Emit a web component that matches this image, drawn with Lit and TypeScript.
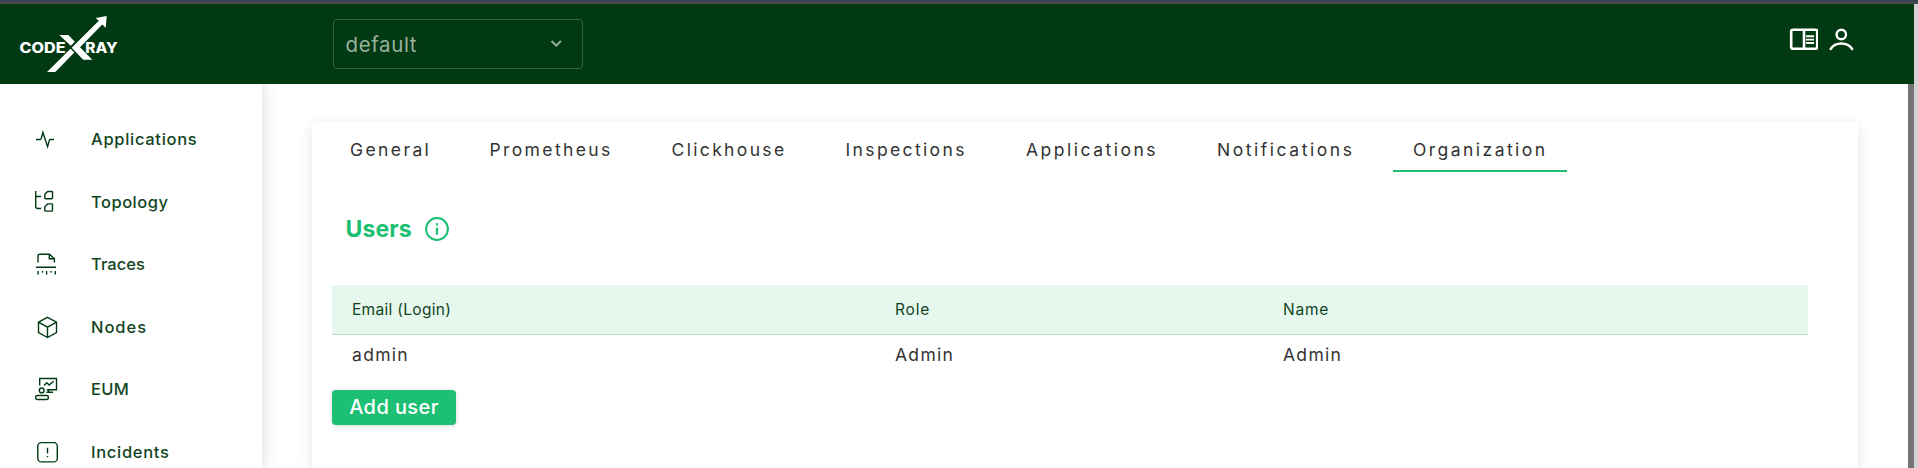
import { LitElement, html, svg, css } from "lit";
import { customElement, state } from "lit/decorators.js";

interface Label {
  text: string;
  track: number;
}

const NAV: (Label & { icon: unknown })[] = [
  {
    text: "Applications",
    track: 0.7,
    icon: svg`<path d="M8 20.5h4.3q.6 0 .8-.6l1.8-6.4 4.7 14.2 1.8-6.6q.2-.6.8-.6H26"/>`,
  },
  {
    text: "Topology",
    track: 0.5,
    icon: svg`<path d="M7.7 9v15.3q0 2.2 2.2 2.2h3.2M7.7 14.5h5.4M19.6 9.5h4.2q.7 0 .7.7v5.8q0 .7-.7.7h-6.3q-.7 0-.7-.7v-3.7zM19.6 21.9h4.2q.7 0 .7.7v5.8q0 .7-.7.7h-6.3q-.7 0-.7-.7v-3.7z"/>`,
  },
  {
    text: "Traces",
    track: 0.05,
    icon: svg`<path d="M10 18.5V12q0-1.8 1.8-1.8h9.6l5 4.6v3.7M21.3 10.2v4.6h5M8 23.2h20M10.1 27v3.4M14.5 27v1.7M18.6 27v3.4M23 27v1.7M27.3 27v3.4"/>`,
  },
  {
    text: "Nodes",
    track: 0.95,
    icon: svg`<path d="M19.5 10.3l9 4.8v10.6l-9 4.8-9-4.8V15.1zM10.5 15.1l9 5.1 9-5.1M19.5 20.2v10.3"/>`,
  },
  {
    text: "EUM",
    track: 0.3,
    icon: svg`<path d="M11.7 16.5v-7h16.8v11.2h-9.8M20.5 20.9v2.4M18.3 23.3H25M16 16.6l2.8-2.8 2.3 2.3 4.6-3.8"/><circle cx="13.7" cy="21.4" r="2.4"/><rect x="7.6" y="26.5" width="12.8" height="4" rx="1.9"/>`,
  },
  {
    text: "Incidents",
    track: 0.7,
    icon: svg`<rect x="9.8" y="10.6" width="19.5" height="19.3" rx="3.5"/><path d="M19.5 15.8v5.8M19.5 24v1.3"/>`,
  },
];

const TABS: Label[] = [
  { text: "General", track: 2.4 },
  { text: "Prometheus", track: 2.38 },
  { text: "Clickhouse", track: 2.35 },
  { text: "Inspections", track: 2.37 },
  { text: "Applications", track: 2.5 },
  { text: "Notifications", track: 2.54 },
  { text: "Organization", track: 2.45 },
];

@customElement("app-root")
export class AppRoot extends LitElement {
  static styles = css`
    :host {
      display: flex;
      flex-direction: column;
      height: 468px;
      overflow: hidden;
      background: #fff;
      font-family: Inter, "Noto Sans", sans-serif;
      color: #333;
    }
    svg {
      display: block;
      flex: none;
    }
    .strip {
      height: 2px;
      flex: none;
      background: #394254;
      border-bottom: 2px solid #4b4a4f;
    }
    .shell {
      display: flex;
      flex: 1;
      min-height: 0;
    }
    .page {
      flex: 1;
      display: flex;
      flex-direction: column;
      min-width: 0;
    }
    .gutter {
      width: 4px;
      background: #d3d3d3;
    }
    .header {
      height: 80px;
      flex: none;
      display: flex;
      align-items: flex-start;
      background: #013912;
      color: #fff;
    }
    .logo {
      margin: 6px 208px 0 15px;
    }
    .logo text {
      font: 800 14px Inter, sans-serif;
      fill: #fff;
    }
    .select {
      box-sizing: border-box;
      width: 250px;
      height: 50px;
      margin-top: 15px;
      padding: 0 19px 0 11.5px;
      border: 1px solid #34603f;
      border-radius: 4px;
      display: flex;
      align-items: center;
      justify-content: space-between;
      font-size: 20.5px;
      letter-spacing: 0.6px;
      color: #99b09f;
    }
    .actions {
      margin: 22px 58px 0 auto;
      display: flex;
      gap: 8px;
    }
    .body {
      flex: 1;
      display: flex;
      min-height: 0;
    }
    .nav {
      width: 262px;
      flex: none;
      padding-top: 24px;
      display: grid;
      grid-template-rows: 63px 62px 63px 62px 63px 62px;
      box-sizing: border-box;
      box-shadow: 2px 0 14px rgba(0, 0, 0, 0.13);
      clip-path: inset(0 -24px 0 0);
      color: #114522;
    }
    .item {
      display: flex;
      padding-left: 28px;
      gap: 23px;
      font-size: 16.5px;
      font-weight: 500;
      line-height: 62px;
    }
    .item svg {
      margin-top: 11px;
      fill: none;
      stroke: #013912;
      stroke-width: 1.4;
    }
    .main {
      flex: 1;
      padding: 38px 50px 0;
      display: flex;
      overflow: hidden;
    }
    .card {
      flex: 1;
      padding: 0 50px 0 20px;
      background: #fff;
      box-shadow: 0 3px 14px rgba(0, 0, 0, 0.1);
    }
    .thumb {
      width: 6px;
      background: #757575;
    }
    .tabs {
      display: grid;
      grid-template-columns: 139.5px 182px 174px 180.5px 191px 196px 174px;
      margin-left: -2px;
      height: 50px;
    }
    .tab {
      box-sizing: border-box;
      height: 50px;
      padding-left: 20px;
      font-size: 17.5px;
      line-height: 56px;
      white-space: nowrap;
    }
    .active {
      border-bottom: 2px solid #1dbf73;
    }
    .title {
      display: flex;
      align-items: center;
      gap: 12.5px;
      margin: 41px 0 41px 13.5px;
      height: 31px;
      color: #1dbf73;
      font-size: 23px;
      font-weight: 700;
      letter-spacing: 0.1px;
    }
    .row {
      display: grid;
      grid-template-columns: 543px 388px 1fr;
      padding-left: 20px;
    }
    .head {
      box-sizing: border-box;
      height: 50px;
      border-bottom: 1px solid #c2d6cd;
      background: #e6f7ee;
      color: #114522;
      font-size: 15.5px;
      line-height: 50px;
      letter-spacing: 0.8px;
    }
    .email {
      letter-spacing: 0.3px;
    }
    .data {
      height: 55px;
      font-size: 17.5px;
      line-height: 40px;
      letter-spacing: 1.3px;
    }
    .add {
      width: 124px;
      height: 35px;
      padding: 0;
      border: 0;
      border-radius: 4px;
      background: #1dbf73;
      box-shadow: 0 1px 4px rgba(0, 0, 0, 0.16);
      color: #fff;
      font: 500 20px/35px Inter, sans-serif;
      letter-spacing: 0.41px;
    }
  `;

  @state() private tab = "Organization";

  render() {
    return html`
      <div class="strip"></div>
      <div class="shell">
        <div class="page">
          <header class="header">
            <svg class="logo" width="110" height="70" viewBox="0 0 110 70" fill="#fff">
              <text x="4.5" y="42.7" textLength="46" lengthAdjust="spacingAndGlyphs">CODE</text>
              <text x="70.2" y="42.7" textLength="32.5" lengthAdjust="spacingAndGlyphs">RAY</text>
              <path d="M44.3 25h9l6.5 6.8-4 4zM32 62h8.3L59.3 42.5 55.5 38.8z" />
              <path d="M56.7 37.7L83.8 10.8 80.7 8 91.7 6l-1 11.7-3.4-3.1L65 37.2l12.3 12.5h-9z" />
            </svg>
            <div class="select">
              <span>default</span>
              <svg width="14" height="10" viewBox="0 0 14 10" fill="none" stroke="#99b09f" stroke-width="2">
                <path d="M2.5 2l4.7 4.7L11.9 2" />
              </svg>
            </div>
            <div class="actions">
              <svg width="30" height="26" viewBox="0 0 30 26" fill="none" stroke="#fff" stroke-width="2.6">
                <rect x="3.2" y="3.8" width="26" height="19" rx="1.8" />
                <path d="M16 4v19" />
                <path d="M18 10.2h8M18 13.6h8M18 17h8" stroke-width="1.9" />
              </svg>
              <svg width="30" height="26" viewBox="0 0 30 26" fill="none" stroke="#fff" stroke-width="2.4" stroke-linecap="round">
                <circle cx="15.3" cy="8.5" r="4.7" />
                <path d="M4.6 23c4.6-7.4 16.8-7.4 21.6 0" />
              </svg>
            </div>
          </header>
          <div class="body">
            <nav class="nav">
              ${NAV.map(
                (n) => html`<div class="item" style="letter-spacing:${n.track}px">
                  <svg width="40" height="40" viewBox="0 0 40 40">${n.icon}</svg><span>${n.text}</span>
                </div>`
              )}
            </nav>
            <main class="main">
              <section class="card">
                <div class="tabs">
                  ${TABS.map(
                    (t) => html`<div
                      class="tab ${t.text === this.tab ? "active" : ""}"
                      style="letter-spacing:${t.track}px"
                      @click=${() => (this.tab = t.text)}
                    >${t.text}</div>`
                  )}
                </div>
                <div class="title">
                  <span>Users</span>
                  <svg width="26" height="26" viewBox="0 0 26 26" fill="none" stroke="#1dbf73" stroke-width="2">
                    <circle cx="13" cy="13" r="10.9" />
                    <path d="M13 11.7v7M13 7.2v2.3" stroke-width="2.3" />
                  </svg>
                </div>
                <div class="row head"><span class="email">Email (Login)</span><span>Role</span><span>Name</span></div>
                <div class="row data"><span>admin</span><span>Admin</span><span>Admin</span></div>
                <button class="add">Add user</button>
              </section>
            </main>
            <div class="thumb"></div>
          </div>
        </div>
        <div class="gutter"></div>
      </div>
    `;
  }
}
